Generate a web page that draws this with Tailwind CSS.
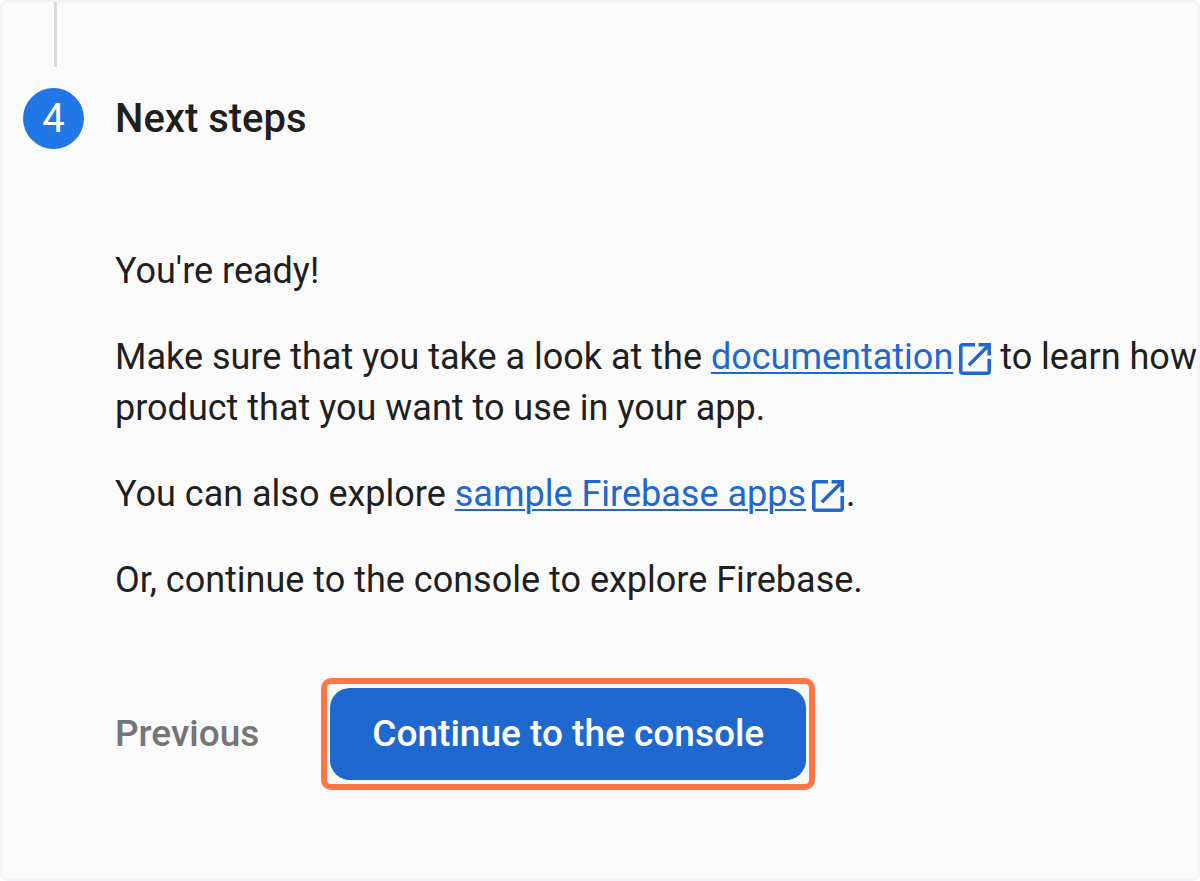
<!DOCTYPE html>
<html lang="en">
  <head>
    <meta charset="UTF-8" />
    <meta name="viewport" content="width=device-width, initial-scale=1.0" />
    <title>Next steps</title>
    <script src="https://cdn.jsdelivr.net/npm/@tailwindcss/browser@4"></script>
  </head>

  <body class="bg-white font-[Roboto,sans-serif] text-[#1f1f1f]">
    <main class="min-h-screen overflow-hidden rounded-lg border-2 border-[#f2f2f8] bg-[#fafafa] pl-[21px]">
      <div class="ml-[31px] h-[65px] w-[3px] bg-[#dadada]"></div>

      <header class="mt-[21px] flex items-center gap-[31px]">
        <span class="flex size-[61px] shrink-0 items-center justify-center rounded-full bg-[#2277e6] text-[40px] text-white">4</span>
        <h1 class="text-[40px] font-medium">Next steps</h1>
      </header>

      <section class="mt-[97px] ml-[92px] flex flex-col gap-[35px] text-[36px] leading-[51px] whitespace-nowrap">
        <p>You're ready!</p>
        <p>
          Make sure that you take a look at the
          <a href="#" class="text-[#1f68cf] underline decoration-2 underline-offset-[3px]">documentation</a><svg class="ml-1.5 inline size-8" viewBox="0 0 18 18" fill="#1f68cf" aria-hidden="true">
            <path d="M16 16H2V2h7V0H2C.9 0 0 .9 0 2v14c0 1.1.9 2 2 2h14c1.1 0 2-.9 2-2V9h-2v7zM11 0v2h3.600L4.800 11.800l1.400 1.400L16 3.400V7h2V0h-7z" />
          </svg>
          to learn how<br />
          product that you want to use in your app.
        </p>
        <p>
          You can also explore
          <a href="#" class="text-[#1f68cf] underline decoration-2 underline-offset-[3px]">sample Firebase apps</a><svg class="mr-0.5 ml-1.5 inline size-8" viewBox="0 0 18 18" fill="#1f68cf" aria-hidden="true">
            <path d="M16 16H2V2h7V0H2C.9 0 0 .9 0 2v14c0 1.1.9 2 2 2h14c1.1 0 2-.9 2-2V9h-2v7zM11 0v2h3.600L4.800 11.800l1.400 1.400L16 3.400V7h2V0h-7z" />
          </svg>.
        </p>
        <p>Or, continue to the console to explore Firebase.</p>
      </section>

      <div class="mt-[72px] ml-[92px] flex items-center gap-[62px] text-[37px] font-medium">
        <button type="button" class="text-[#757575]">Previous</button>
        <div class="rounded-[10px] border-6 border-[#ff7643] px-[3px] py-1">
          <button type="button" class="block h-[92px] rounded-[20px] bg-[#1f68cf] px-[42px] text-white">Continue to the console</button>
        </div>
      </div>
    </main>
  </body>
</html>
